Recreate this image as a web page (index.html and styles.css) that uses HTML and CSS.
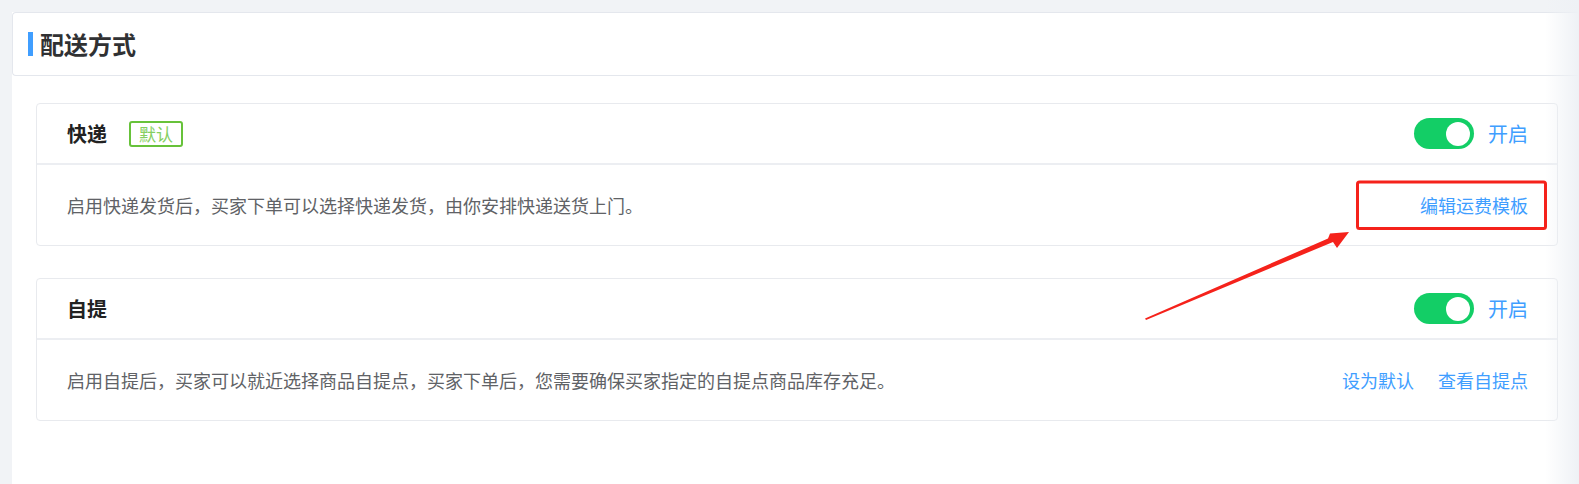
FILE: index.html
```html
<!DOCTYPE html>
<html lang="zh-CN">
<head>
<meta charset="utf-8">
<title>配送方式</title>
<link rel="stylesheet" href="styles.css">
</head>
<body>
<div class="main">
  <div class="page-head">
    <span class="bar"></span>
    <h1 class="page-title">配送方式</h1>
  </div>
  <div class="content">
    <div class="card">
      <div class="card-head">
        <span class="card-title">快递</span>
        <span class="tag">默认</span>
        <div class="switch-wrap">
          <span class="switch"><span class="knob"></span></span>
          <span class="switch-text">开启</span>
        </div>
      </div>
      <div class="card-body">
        <span class="desc">启用快递发货后，买家下单可以选择快递发货，由你安排快递送货上门。</span>
        <div class="links">
          <a class="link">编辑运费模板</a>
        </div>
      </div>
    </div>
    <div class="card">
      <div class="card-head">
        <span class="card-title">自提</span>
        <div class="switch-wrap">
          <span class="switch"><span class="knob"></span></span>
          <span class="switch-text">开启</span>
        </div>
      </div>
      <div class="card-body">
        <span class="desc">启用自提后，买家可以就近选择商品自提点，买家下单后，您需要确保买家指定的自提点商品库存充足。</span>
        <div class="links">
          <a class="link">设为默认</a>
          <a class="link">查看自提点</a>
        </div>
      </div>
    </div>
  </div>
</div>
<div class="edge-shade"></div>
<svg class="annotation" width="1579" height="484" viewBox="0 0 1579 484">
  <rect x="1357.5" y="182" width="188" height="46.5" rx="2" fill="none" stroke="#f5221b" stroke-width="3"/>
  <polygon fill="#f5221b" points="1145,318.5 1328,238.5 1330,233.5 1349,232 1337,248 1333,242 1146,320"/>
</svg>
</body>
</html>
```
FILE: styles.css
```css
* { box-sizing: border-box; }
html, body { margin: 0; padding: 0; }
body {
  background: #f1f3f6;
  font-family: "Noto Sans CJK SC", "Noto Sans", sans-serif;
  width: 1579px;
  height: 484px;
  overflow: hidden;
  position: relative;
}
.main {
  margin: 12px 0 0 12px;
  background: #fff;
  height: 472px;
}
.page-head {
  height: 64px;
  border: 1px solid #e4e7ed;
  border-right: none;
  border-radius: 4px 0 0 4px;
  display: flex;
  align-items: center;
  padding-left: 15px;
}
.bar {
  width: 5px;
  height: 24px;
  background: #409eff;
  margin-right: 7px;
}
.page-title {
  margin: 0;
  font-size: 24px;
  font-weight: 700;
  color: #303133;
  line-height: 1;
}
.content {
  padding: 27px 21px 0 24px;
  display: flex;
  flex-direction: column;
  gap: 32px;
}
.card {
  border: 1px solid #e8eaee;
  border-radius: 4px;
}
.card-head {
  height: 61px;
  border-bottom: 2px solid #eceef2;
  display: flex;
  align-items: center;
  padding: 0 29px 0 30px;
}
.card-title {
  font-size: 20px;
  font-weight: 700;
  color: #222;
}
.tag {
  margin-left: 22px;
  height: 26px;
  padding: 0 8px;
  border: 2px solid #67c23a;
  border-radius: 3px;
  color: #85cf62;
  font-size: 17px;
  display: flex;
  align-items: center;
}
.switch-wrap {
  margin-left: auto;
  display: flex;
  align-items: center;
}
.switch {
  width: 60px;
  height: 31px;
  border-radius: 16px;
  background: #13ce66;
  display: flex;
  align-items: center;
  justify-content: flex-end;
  padding-right: 4px;
}
.knob {
  width: 24px;
  height: 24px;
  border-radius: 50%;
  background: #fff;
}
.switch-text {
  margin-left: 14px;
  font-size: 20px;
  color: #409eff;
}
.card-body {
  height: 80px;
  display: flex;
  align-items: center;
  padding: 0 29px 0 30px;
}
.desc {
  font-size: 18px;
  color: #606266;
}
.links {
  margin-left: auto;
  display: flex;
  gap: 24px;
}
.link {
  font-size: 18px;
  color: #409eff;
  cursor: pointer;
}
.edge-shade {
  position: absolute;
  top: 0;
  right: 0;
  width: 34px;
  height: 484px;
  background: linear-gradient(to right, rgba(240,243,247,0), #eef1f5);
  pointer-events: none;
}
.annotation {
  position: absolute;
  left: 0;
  top: 0;
  pointer-events: none;
}
```
